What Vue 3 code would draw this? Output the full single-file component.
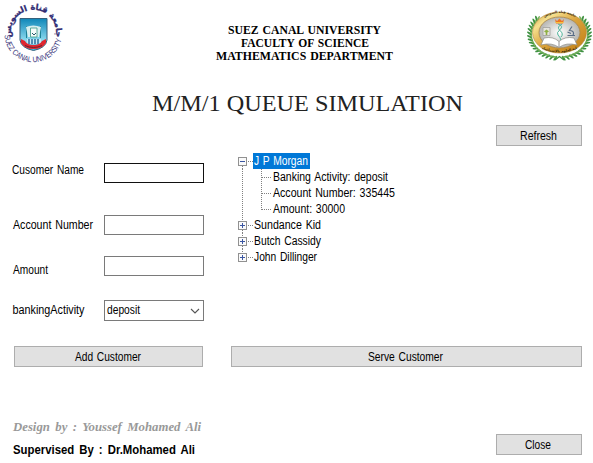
<script setup>
import { ref } from 'vue'

const fields = ref([
  { label: 'Cusomer Name', cls: 'name', width: 72 },
  { label: 'Account Number', cls: 'account', width: 80 },
  { label: 'Amount', cls: 'amount', width: 35 }
])
const customers = ref([
  {
    name: 'J P Morgan', width: 54, open: true,
    details: [
      { text: 'Banking Activity: deposit', width: 115 },
      { text: 'Account Number: 335445', width: 122 },
      { text: 'Amount: 30000', width: 72 }
    ]
  },
  { name: 'Sundance Kid', width: 67, details: [] },
  { name: 'Butch Cassidy', width: 67, details: [] },
  { name: 'John Dillinger', width: 63, details: [] }
])
// Two mirrored sprays of laurel leaves, measured from the bottom knot upwards
const leaves = Array.from({ length: 17 }, (_, i) => 82 - i * 7.6)
const leafAt = (deg, tilt, r) => {
  const a = (deg * Math.PI) / 180
  return `translate(${r * 30 * Math.cos(a)} ${r * 24.5 * Math.sin(a)}) rotate(${deg + tilt})`
}
</script>

<template>
  <main class="window">
    <header class="header">
      <svg class="crest" width="64" height="64" viewBox="0 0 64 64">
        <defs>
          <path id="upper" d="M10.500 37 A22.500 22.500 0 1 1 54.500 37" />
          <path id="lower" d="M3.500 34 A28 27.500 0 0 0 61 34" />
          <linearGradient id="sky" x1="0" y1="0" x2="0" y2="1">
            <stop offset="0" stop-color="#0f86b8" />
            <stop offset=".7" stop-color="#8fdcf0" />
            <stop offset="1" stop-color="#35bfe6" />
          </linearGradient>
        </defs>
        <text class="arabic"><textPath href="#upper" startOffset="50%" text-anchor="middle">جامعة قناة السويس</textPath></text>
        <text class="latin"><textPath href="#lower" startOffset="1" textLength="83" lengthAdjust="spacingAndGlyphs">SUEZ CANAL UNIVERSITY</textPath></text>
        <path d="M19 18.500H46V40Q45 48 32.500 50.500Q20 48 19 40Z" fill="url(#sky)" stroke="#35617c" />
        <path d="M25.500 26V38M39.500 26V38" stroke="#1f8296" stroke-width="1" />
        <path d="M25 27Q32 24 40 27L38 37H27Z" fill="#d9eff0" />
        <path d="M29.500 28H36V37H29.500Z" fill="#f7fcfa" stroke="#4da290" stroke-width=".9" />
        <path d="M31 33L33 35L35 33" fill="none" stroke="#28586b" stroke-width="1" />
        <path d="M26 39H40V44H26Z" fill="#c9e9f4" />
        <path d="M28 39V44M31 39V44M34 39V44M37 39V44" stroke="#1d6496" stroke-width="1.400" />
        <path d="M20 39L24 41Q26 45 32.500 45Q39 45 41 41L45 39V43Q41 49 32.500 49Q24 49 20 43Z" fill="#df2730" />
        <path d="M24 45.500Q32.500 49.500 41 45.500" stroke="#75202a" stroke-width="1" fill="none" />
      </svg>

      <div class="heading">
        <svg class="institution" width="200" height="45">
          <text x="12" y="14" textLength="153" lengthAdjust="spacingAndGlyphs">SUEZ CANAL UNIVERSITY</text>
          <text x="25" y="27" textLength="128" lengthAdjust="spacingAndGlyphs">FACULTY OF SCIENCE</text>
          <text x="0" y="40" textLength="177" lengthAdjust="spacingAndGlyphs">MATHEMATICS DEPARTMENT</text>
        </svg>
        <svg class="title" width="320" height="26">
          <text x="0" y="19" textLength="311" lengthAdjust="spacingAndGlyphs">M/M/1 QUEUE SIMULATION</text>
        </svg>
      </div>

      <svg class="seal" width="66" height="56" viewBox="0 0 66 56">
        <defs>
          <linearGradient id="gold" x1="0" y1="0" x2="1" y2="1">
            <stop offset="0" stop-color="#c99a35" />
            <stop offset=".22" stop-color="#f6e08f" />
            <stop offset=".5" stop-color="#d9a23a" />
            <stop offset="1" stop-color="#c07c12" />
          </linearGradient>
          <radialGradient id="silver">
            <stop offset="0" stop-color="#fff" />
            <stop offset="1" stop-color="#b5b5b2" />
          </radialGradient>
          <path id="rimTop" d="M16 11Q32 1 50 11" />
          <path id="rimLow" d="M14 41.500Q32 49 51 41.500" />
        </defs>
        <g v-for="side in [1, -1]" :key="side" :transform="`translate(32.5 27) scale(${side} 1)`">
          <template v-for="d in leaves" :key="d">
            <ellipse rx="2.900" ry="1" fill="#3f9142" :transform="leafAt(d, -30, 1)" />
            <ellipse rx="2.500" ry=".9" fill="#79b35c" :transform="leafAt(d - 3, -75, .95)" />
          </template>
        </g>
        <ellipse cx="32.500" cy="25.500" rx="27" ry="20.500" fill="url(#gold)" stroke="#a98235" stroke-width=".6" />
        <ellipse cx="32.500" cy="25.500" rx="20.500" ry="15.500" fill="url(#silver)" stroke="#a9854a" stroke-width=".8" />
        <text class="rim"><textPath href="#rimTop" startOffset="50%" text-anchor="middle">جامعة قناة السويس</textPath></text>
        <path d="M16 20.500H23V28.500H16Z" fill="#e5e3dc" stroke="#999995" stroke-width=".7" />
        <path d="M17 24.500L19.500 22.500L22 24.500L20.300 25.500V28H18.700V25.500Z" fill="#8fb044" />
        <path d="M31 17Q37 19 33 22.500T31 28T34 33M35 17Q29 20 33 23.500T34 30" fill="none" stroke="#4fb49a" stroke-width="1" />
        <path d="M28 12L30 14L32.500 11.500L35 14L37 12L36 16.500H29Z" fill="#ed7421" />
        <path d="M28.500 15.500H36.500" stroke="#f7c33b" stroke-width="1" />
        <path d="M45 19.500L42 24M43 23.500Q48 24 46 28.500M40.500 28.500H48M40.500 25L44 26.500" fill="none" stroke="#586c86" stroke-width="1.200" />
        <path d="M17 31Q26 29 32 34.500Q38 29 47 31L50 38Q39 35 32 40.500Q25 35 14 38Z" fill="#fff" stroke="#898984" stroke-width=".7" />
        <path d="M32 34.500V40" stroke="#777" stroke-width=".8" />
        <text class="rim"><textPath href="#rimLow" startOffset="50%" text-anchor="middle">كلية العلوم بالإسماعيلية</textPath></text>
        <path d="M28 53L32.500 49.500L37 53" fill="none" stroke="#3f9142" stroke-width="1.300" />
      </svg>
    </header>

    <div class="content">
      <section class="left">
        <label v-for="f in fields" :key="f.label" class="field" :class="f.cls">
          <svg class="caption" width="91" height="16"><text x="0" y="12" :textLength="f.width" lengthAdjust="spacingAndGlyphs">{{ f.label }}</text></svg>
          <input type="text" />
        </label>
        <div class="field activity">
          <svg class="caption" width="91" height="16"><text x="-.5" y="12" textLength="72" lengthAdjust="spacingAndGlyphs">bankingActivity</text></svg>
          <div class="select">
            <svg width="98" height="19">
              <text x="2" y="13" textLength="33" lengthAdjust="spacingAndGlyphs">deposit</text>
              <path d="M86 8L90 12L94 8" fill="none" stroke="#555" stroke-width="1.100" />
            </svg>
          </div>
        </div>
        <button class="add"><svg width="66" height="16"><text x="0" y="12" textLength="66" lengthAdjust="spacingAndGlyphs">Add Customer</text></svg></button>
      </section>

      <section class="right">
        <button class="small"><svg width="37" height="16"><text x="0" y="12" textLength="37" lengthAdjust="spacingAndGlyphs">Refresh</text></svg></button>
        <ul class="tree">
          <li v-for="(c, i) in customers" :key="c.name">
            <div class="node">
              <svg width="15" height="16" shape-rendering="crispEdges">
                <path v-if="i > 0" d="M4.500 0V4" class="dots" />
                <path v-if="i < customers.length - 1" d="M4.500 13V16" class="dots" />
                <path d="M10 8.500H15" class="dots" />
                <rect x=".5" y="4.500" width="8" height="8" rx="1" fill="#fafafa" stroke="#919191" />
                <path :d="c.open ? 'M2 8.5H7' : 'M2 8.5H7M4.5 6V11'" stroke="#3b56a2" />
              </svg>
              <span class="node-label" :class="{ selected: c.open }">
                <svg :width="c.width" height="16"><text x="0" y="12" :textLength="c.width" lengthAdjust="spacingAndGlyphs">{{ c.name }}</text></svg>
              </span>
            </div>
            <div v-for="(d, j) in c.details" :key="d.text" class="detail">
              <svg width="35" height="16" shape-rendering="crispEdges">
                <path d="M4.500 0V16" class="dots" />
                <path :d="j === c.details.length - 1 ? 'M23.5 0V9' : 'M23.5 0V16'" class="dots" />
                <path d="M24 8.500H33" class="dots" />
              </svg>
              <svg :width="d.width" height="16"><text x="0" y="12" :textLength="d.width" lengthAdjust="spacingAndGlyphs">{{ d.text }}</text></svg>
            </div>
          </li>
        </ul>
        <button class="serve"><svg width="75" height="16"><text x="0" y="12" textLength="75" lengthAdjust="spacingAndGlyphs">Serve Customer</text></svg></button>
      </section>
    </div>

    <footer class="footer">
      <svg class="credits" width="200" height="44">
        <text class="designer" x="1" y="14" textLength="188" lengthAdjust="spacingAndGlyphs">Design by : Youssef Mohamed Ali</text>
        <text class="supervisor" x="1" y="37" textLength="182" lengthAdjust="spacingAndGlyphs">Supervised By : Dr.Mohamed Ali</text>
      </svg>
      <button class="small close"><svg width="26" height="16"><text x="0" y="12" textLength="26" lengthAdjust="spacingAndGlyphs">Close</text></svg></button>
    </footer>
  </main>
</template>

<style>
body { margin: 0; background: #fff; overflow: hidden; }
</style>

<style scoped>
* { box-sizing: border-box; }
.window { width: 593px; height: 463px; background: #fff; font: 12px "Liberation Sans", Arial, sans-serif; color: #000; overflow: hidden; }
svg { display: block; flex: none; overflow: visible; }
text { fill: #000; }
.header { height: 125px; display: flex; align-items: flex-start; }
.crest { margin-left: 1px; }
.crest .arabic { font: bold 8.200px "DejaVu Sans", sans-serif; fill: #302b73; stroke: #302b73; stroke-width: .3; }
.crest .latin { font: 8px "Liberation Sans", sans-serif; fill: #373379; }
.heading { width: 462px; padding-top: 20px; }
.institution { margin-left: 151px; font: bold 11.500px "Liberation Serif", serif; word-spacing: 1px; }
.title { margin: 27px 0 0 87px; font: 23px "Liberation Serif", serif; }
.title text { fill: #222; }
.seal { margin-top: 7px; }
.rim { font: bold 3.400px "DejaVu Sans", sans-serif; fill: #3b2a08; }
.content { display: grid; grid-template-columns: 191px 351px; column-gap: 27px; padding-left: 13px; height: 242px; word-spacing: 1px; }
.left, .right { display: flex; flex-direction: column; }
.left { padding-top: 38px; }
.field { display: flex; align-items: flex-start; height: 20px; }
.field input { width: 100px; height: 20px; margin: 0; padding: 0; border: 1px solid #7a7a7a; background: #fff; outline: none; }
.name input { border-color: #111; }
.name { margin-bottom: 32px; }
.name .caption { margin: -1px 1px 0 -1px; }
.account { margin-bottom: 21px; }
.amount { margin-bottom: 24px; }
.account .caption { margin-top: 2px; }
.amount .caption { margin-top: 6px; }
.activity { height: 21px; margin-bottom: 25px; }
.activity .caption { margin-top: 2px; }
.select { width: 100px; height: 21px; border: 1px solid #7a7a7a; }
button { height: 21px; padding: 0; border: 1px solid #adadad; background: #e1e1e1; display: flex; align-items: center; justify-content: center; font: inherit; word-spacing: inherit; }
.add { width: 189px; margin-left: 1px; }
.add svg, .serve svg { margin-right: 2px; }
.small { width: 86px; align-self: flex-end; }
.small svg { margin-right: 2px; }
.tree { list-style: none; margin: 7px 0 0 7px; padding: 0; height: 193px; }
.node, .detail { display: flex; height: 16px; }
.node-label { padding: 0 2px 0 1px; }
.selected { background: #0078d7; }
.selected text { fill: #fff; }
.dots { stroke: #808080; stroke-dasharray: 1 1; }
.footer { display: flex; height: 96px; padding: 50px 11px 0 12px; justify-content: space-between; }
.designer { fill: #999; font: italic bold 11.500px "Liberation Serif", serif; word-spacing: 2px; }
.supervisor { font-weight: bold; font-size: 12px; word-spacing: 2px; }
.close { align-self: flex-start; margin-top: 17px; }
</style>
